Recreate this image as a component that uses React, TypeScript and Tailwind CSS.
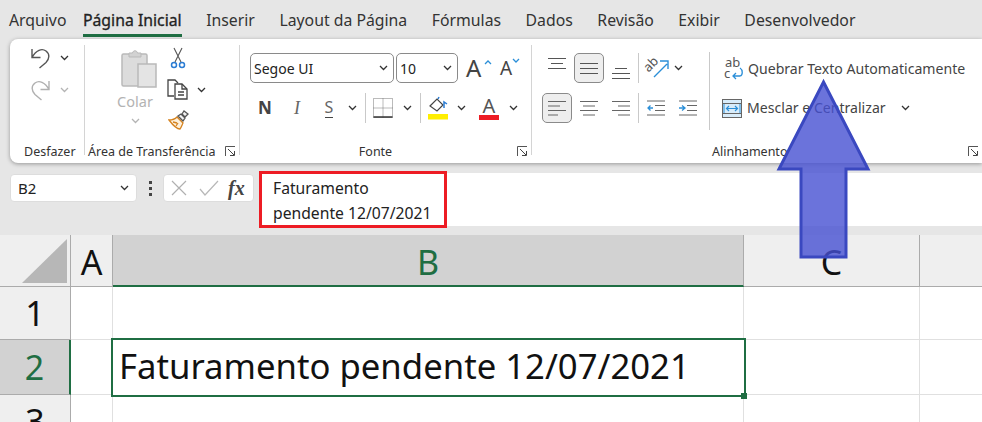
import React from "react";

const font = "font-['Noto_Sans','Open_Sans',sans-serif]";

function Chev({ gray = false, className = "" }: { gray?: boolean; className?: string }) {
  return (
    <svg width="9" height="6" viewBox="0 0 9 6" className={className} fill="none" stroke={gray ? "#b4b4b4" : "#333"} strokeWidth="1.3">
      <path d="M1 1l3.5 3.5L8 1" />
    </svg>
  );
}

function Launcher() {
  return (
    <svg width="11" height="11" viewBox="0 0 11 11" fill="none" stroke="#555" strokeWidth="1">
      <path d="M.5 10V.5H10" />
      <path d="M3 3l6 6M5 9.5h4.5V5" stroke="#444" />
    </svg>
  );
}

function Lines({ widths, gap = 5, color = "#555" }: { widths: number[]; gap?: number; color?: string }) {
  return (
    <span className="flex flex-col items-center" style={{ gap }}>
      {widths.map((w, i) => (
        <span key={i} className="block h-[1px]" style={{ width: w, background: color }} />
      ))}
    </span>
  );
}

function AlignLines({ widths, justify }: { widths: number[]; justify: string }) {
  return (
    <svg width="18" height="18" viewBox="0 0 18 18" stroke="#666" strokeWidth="1">
      {widths.map((w, i) => {
        const x = justify === "l" ? 0 : justify === "r" ? 18 - w : (18 - w) / 2;
        return <path key={i} d={`M${x} ${2.5 + i * 4.5}h${w}`} />;
      })}
    </svg>
  );
}

function Sep() {
  return <span className="mx-[5px] block h-[30px] w-[1px] bg-[#c9c9c9]" />;
}

function Group({ w, label, labelClass, launcher, children }: { w: string; label: string; labelClass: string; launcher?: boolean; children: React.ReactNode }) {
  return (
    <div className={`relative flex h-[110px] flex-col border-r border-[#d4d4d4] ${w}`}>
      <div className="flex-1">{children}</div>
      <div className={`-mb-[5px] flex h-[16px] items-center text-[12.5px] leading-[16px] text-[#333] ${labelClass}`}>
        <span>{label}</span>
      </div>
      {launcher && (
        <span className="absolute bottom-[-2px] right-[3px]">
          <Launcher />
        </span>
      )}
    </div>
  );
}

const tabs = ["Arquivo", "Página Inicial", "Inserir", "Layout da Página", "Fórmulas", "Dados", "Revisão", "Exibir", "Desenvolvedor"];

function Tabs() {
  return (
    <div className="flex h-[39px] shrink-0 items-start gap-[24.5px] pl-[9px] pt-[10px] text-[15.8px] leading-[20px] text-[#333]">
      {tabs.map((t, i) => (
        <span key={t} className={i === 1 ? "-ml-[8px] h-[27px] border-b-[3px] border-[#1f6e43] text-[#222] [-webkit-text-stroke:0.3px_#222]" : ""}>
          {t}
        </span>
      ))}
    </div>
  );
}

function UndoGroup() {
  return (
    <div className="flex flex-col gap-[10px] pl-[20px] pt-[2px]">
      <div className="flex items-center gap-[8px]">
        <svg width="22" height="22" viewBox="0 0 22 22" fill="none" stroke="#555" strokeWidth="1.4">
          <path d="M2 2v8.500h8.500M2 10.500C6 3 12 1 16 4c4 3 3.500 8 0 11.500L9.500 21" />
        </svg>
        <Chev />
      </div>
      <div className="flex items-center gap-[8px]">
        <svg width="22" height="22" viewBox="0 0 22 22" fill="none" stroke="#b0b0b0" strokeWidth="1.4">
          <path d="M19 2v8.500h-8.500M19 10.500C15 3 9 1 5 4c-4 3-3.500 8 0 11.500l6.500 5.500" />
        </svg>
        <Chev gray />
      </div>
    </div>
  );
}

function ClipboardGroup() {
  return (
    <div className="flex pl-[32px] pt-[4px]">
      <div className="flex w-[36px] flex-col items-center">
        <svg width="36" height="40" viewBox="0 0 36 40" className="ml-[8px] shrink-0">
          <rect x="1" y="5" width="25" height="32" rx="1.500" fill="#dcdcdc" stroke="#b9b9b9" strokeWidth="1.500" />
          <path d="M8 8V4h3.500c.5-3 4.500-3 5 0H20v4z" fill="#d2d2d2" stroke="#b9b9b9" />
          <rect x="17" y="15" width="18" height="23" fill="#e4e4e4" stroke="#b9b9b9" strokeWidth="1.500" />
        </svg>
        <span className="mt-[2px] text-[14.5px] leading-[20px] text-[#b3b3b3]">Colar</span>
        <Chev gray className="mt-[7px]" />
      </div>
      <div className="ml-[15px] flex flex-col items-start">
        <svg width="16" height="22" viewBox="0 0 16 22" className="ml-[2px] -mt-[2px]" fill="none" strokeWidth="1.100">
          <path d="M4 1l7 14M12 1L5 15" stroke="#555" />
          <circle cx="4" cy="18" r="2.500" stroke="#2b7cd3" strokeWidth="1.500" />
          <circle cx="12" cy="18" r="2.500" stroke="#2b7cd3" strokeWidth="1.500" />
        </svg>
        <div className="mt-[10px] flex items-center gap-[8px]">
          <svg width="22" height="21" viewBox="0 0 22 21" fill="none" stroke="#444" strokeWidth="1.300" className="-ml-[1px]">
            <path d="M7 17H1V1h7l3 3" />
            <path d="M8 5h7l5 5v10H8z" fill="#fff" />
            <path d="M15 5v5h5M11 13h6M11 16h6" />
          </svg>
          <Chev />
        </div>
        <svg width="21" height="20" viewBox="0 0 21 20" className="mt-[10px]" fill="none" strokeWidth="1.300">
          <path d="M1 10c4 0 6-1 8-3l6 6c-1 2-2 5-3 6-4 0-8-5-11-9z" fill="#fdf0dc" stroke="#d5821e" />
          <path d="M5 12l4 1M8 16l2-3" stroke="#d5821e" />
          <path d="M10 6l3-2 4 4-2 3zM14 4l2-3 4 3-3 3z" fill="#f2f2f2" stroke="#555" />
        </svg>
      </div>
    </div>
  );
}

function Select({ w, text }: { w: string; text: string }) {
  return (
    <div className={`flex h-[30px] items-center justify-between rounded-[5px] border border-[#8a8a8a] pl-[3px] pr-[5px] text-[14px] text-[#222] ${w}`}>
      <span>{text}</span>
      <Chev />
    </div>
  );
}

function Cell({ w, children }: { w: string; children: React.ReactNode }) {
  return <span className={`flex justify-center ${w}`}>{children}</span>;
}

function FontGroup() {
  return (
    <div className="flex flex-col pl-[10px] pt-[8px]">
      <div className="flex items-center">
        <Select w="w-[144px]" text="Segoe UI" />
        <span className="w-[2px]" />
        <Select w="w-[62px]" text="10" />
        <span className="relative ml-[8px] flex w-[26px] items-center text-[24px] leading-[22px] text-[#444]">
          A
          <svg width="8" height="5" viewBox="0 0 8 5" className="absolute right-[0px] top-[3px]" fill="none" stroke="#2b8fd8" strokeWidth="1.300"><path d="M1 4l3-3 3 3" /></svg>
        </span>
        <span className="relative ml-[8px] flex w-[20px] items-center text-[19px] leading-[22px] text-[#444]">
          A
          <svg width="8" height="5" viewBox="0 0 8 5" className="absolute right-[0px] top-[1px]" fill="none" stroke="#2b8fd8" strokeWidth="1.300"><path d="M1 1l3 3 3-3" /></svg>
        </span>
      </div>
      <div className="mt-[10px] flex h-[30px] items-center">
        <Cell w="w-[30px]"><span className="text-[17px] font-bold text-[#444]">N</span></Cell>
        <Cell w="w-[34px]"><span className="font-['Liberation_Serif',serif] text-[18px] italic text-[#666]">I</span></Cell>
        <Cell w="w-[30px]"><span className="border-b border-[#444] text-[16px] leading-[19px] text-[#666]">S</span></Cell>
        <Cell w="w-[16px]"><Chev /></Cell>
        <Sep />
        <svg width="20" height="20" viewBox="0 0 20 20" fill="none" stroke="#777" strokeWidth="1" strokeDasharray="1 1" className="ml-[2px]">
          <path d="M.5.5h19v19H.500zM10 .5v19M.5 10h19" />
          <path d="M.5 19h19" strokeDasharray="none" stroke="#333" strokeWidth="1.500" />
        </svg>
        <Chev className="ml-[10px] mr-[3px]" />
        <Sep />
        <svg width="22" height="24" viewBox="0 0 22 24" fill="none" stroke="#444" strokeWidth="1.200" className="ml-[2px]">
          <path d="M2 10l7-7 6 6-6 6z" />
          <path d="M10 3l1-2M16 12V6l3 2" stroke="#2b7cd3" strokeWidth="1.500" />
          <rect x="0" y="18" width="20" height="5.500" fill="#ffee00" stroke="none" />
        </svg>
        <Chev className="ml-[7px]" />
        <span className="ml-[13px] flex w-[20px] flex-col items-center">
          <span className="text-[20px] leading-[17px] text-[#555]">A</span>
          <span className="mt-[1px] block h-[5px] w-[20px] bg-[#ed1c24]" />
        </span>
        <Chev className="ml-[10px]" />
      </div>
    </div>
  );
}

function AlignGroup() {
  const box = "flex h-[30px] w-[30px] items-center justify-center rounded-[5px] border border-[#8a8a8a] bg-[#eeeeee]";
  return (
    <div className="flex h-[86px] pl-[10px] pt-[8px]">
      <div className="flex w-[167px] flex-col">
        <div className="flex h-[30px] items-center pl-[6px]">
          <span className="-mt-[10px] mr-[8px] w-[18px]"><Lines widths={[18, 12, 18]} gap={4} /></span>
          <span className={box}><Lines widths={[18, 18, 18]} gap={4} /></span>
          <span className="ml-[8px] mr-[3px] mt-[10px] w-[18px]"><Lines widths={[12, 18, 18]} gap={4} /></span>
          <Sep />
          <svg width="23" height="22" viewBox="0 0 23 22" className="ml-[2px] overflow-visible" fill="none">
            <text x="-2" y="11" fontSize="13" fill="#555" transform="rotate(-45 6 8)" fontFamily="Noto Sans">ab</text>
            <path d="M8 20L21 7M14 4h8v8" stroke="#2b8fd8" strokeWidth="1.400" />
          </svg>
          <Cell w="w-[18px]"><Chev /></Cell>
        </div>
        <div className="mt-[10px] flex h-[30px] items-center">
          <span className={box}><AlignLines widths={[18, 12, 18, 10]} justify="l" /></span>
          <Cell w="w-[34px]"><AlignLines widths={[18, 12, 18, 12]} justify="c" /></Cell>
          <span className="flex w-[24px] justify-end"><AlignLines widths={[18, 12, 18, 12]} justify="r" /></span>
          <span className="w-[3px]" />
          <Sep />
          <svg width="18" height="16" viewBox="0 0 18 16" className="ml-[3px]" fill="none">
            <path d="M0 1h18M8 5.500h10M8 10.500h10M0 15h18" stroke="#666" />
            <path d="M6 8H1M3.500 5.500L1 8l2.500 2.500" stroke="#2b8fd8" strokeWidth="1.300" />
          </svg>
          <svg width="18" height="16" viewBox="0 0 18 16" className="ml-[14px]" fill="none">
            <path d="M0 1h18M8 5.500h10M8 10.500h10M0 15h18" stroke="#666" />
            <path d="M0 8h5M3 5.500L6 8l-3 2.500" stroke="#2b8fd8" strokeWidth="1.300" />
          </svg>
        </div>
      </div>
      <span className="-mt-[1px] block h-[78px] w-[1px] bg-[#c9c9c9]" />
      <div className="flex flex-col pl-[12px] text-[14.1px] text-[#444]">
        <div className="flex h-[30px] items-center pt-[1px]">
          <span className="relative ml-[2px] flex h-[24px] w-[20px] flex-col text-[13px] leading-[11px] text-[#555]">
            <span className="block pl-[1px]">ab</span>
            <span className="block">c</span>
            <svg width="14" height="14" viewBox="0 0 14 14" className="absolute bottom-[0px] right-[0px]" fill="none" stroke="#2b8fd8" strokeWidth="1.300">
              <path d="M10 1c3 2 3 7 0 8H3M6 6L3 9l3 3" />
            </svg>
          </span>
          <span className="ml-[4px] whitespace-nowrap">Quebrar Texto Automaticamente</span>
        </div>
        <div className="mt-[10px] flex h-[30px] items-center">
          <svg width="20" height="19" viewBox="0 0 20 19" fill="none">
            <rect x=".5" y=".5" width="19" height="18" fill="#d8ecfa" stroke="#666" />
            <path d="M0 4.500h20M0 14.500h20" stroke="#666" />
            <path d="M5 9.500h10M7 7L4.500 9.500 7 12M13 7l2.500 2.500L13 12" stroke="#2b8fd8" strokeWidth="1.200" />
            <path d="M2 5v9M18 5v9" stroke="#2b8fd8" />
          </svg>
          <span className="ml-[5px] whitespace-nowrap">Mesclar e Centralizar</span>
          <Chev className="ml-[15px]" />
        </div>
      </div>
    </div>
  );
}

function Ribbon() {
  return (
    <div className="ml-[10px] flex h-[124px] shrink-0 rounded-l-[8px] bg-white pt-[6px] shadow-[0_1px_4px_rgba(0,0,0,0.35)]">
      <Group w="w-[75px]" label="Desfazer" labelClass="pl-[14px]"><UndoGroup /></Group>
      <Group w="w-[155px]" label="Área de Transferência" labelClass="pl-[3px]" launcher><ClipboardGroup /></Group>
      <Group w="w-[292px]" label="Fonte" labelClass="justify-center pr-[20px]" launcher><FontGroup /></Group>
      <Group w="flex-1 border-r-0" label="Alinhamento" labelClass="pl-[180px]" launcher><AlignGroup /></Group>
    </div>
  );
}

function FormulaRow() {
  return (
    <div className="flex h-[72px] shrink-0 items-start pl-[10px] pt-[9px] text-[15px] text-[#222]">
      <div className="mt-[2px] flex h-[28px] w-[127px] items-center justify-between rounded-[4px] border border-[#dddddd] bg-white pl-[7px] pr-[7px]">
        <span>B2</span>
        <Chev />
      </div>
      <div className="mt-[2px] flex h-[28px] w-[26px] flex-col items-center justify-center gap-[3px]">
        {[0, 1, 2].map((i) => <span key={i} className="block h-[3px] w-[3px] bg-[#444]" />)}
      </div>
      <div className="mt-[2px] flex h-[28px] w-[91px] items-center rounded-[4px] border border-[#dddddd] bg-white pl-[7px]">
        <svg width="16" height="16" viewBox="0 0 16 16" fill="none" stroke="#b0b0b0" strokeWidth="1.200"><path d="M1 1l14 14M15 1L1 15" /></svg>
        <svg width="20" height="16" viewBox="0 0 20 16" className="ml-[12px]" fill="none" stroke="#b8b8b8" strokeWidth="1.200"><path d="M1 9l5 6L19 1" /></svg>
        <span className="ml-[9px] font-['Liberation_Serif',serif] text-[20px] font-bold italic leading-[20px] text-[#444]">fx</span>
      </div>
      <div className="ml-[5px] mt-[1px] h-[53px] flex-1 bg-white">
        <div className="-mt-[2px] h-[57px] w-[188px] border-[3px] border-[#ed1c24] pl-[11px] pt-[2px] leading-[25px]">
          <div className="whitespace-nowrap text-[15.7px]">Faturamento</div>
          <div className="whitespace-nowrap text-[15.7px]">pendente 12/07/2021</div>
        </div>
      </div>
    </div>
  );
}

function Sheet() {
  const head = "flex items-center justify-center bg-[#efefef] text-[34px] leading-none";
  const colHead = "pt-[3px]";
  const grid = "border-b border-r border-[#e0e0e0] bg-white";
  return (
    <div className="grid min-h-0 flex-1 grid-cols-[71px_42px_631px_176px_1fr] grid-rows-[52px_53px_55px_1fr] bg-white">
      <div className="flex items-end justify-end border-b border-r border-[#ababab] bg-[#efefef] pb-[3px] pr-[3px]">
        <svg width="45" height="44" viewBox="0 0 45 44"><polygon points="45,0 45,44 0,44" fill="#b7b7b7" /></svg>
      </div>
      <div className={`${head} ${colHead} border-b border-r border-[#ababab] text-[#111]`}>A</div>
      <div className="flex items-center justify-center border-b-[2px] border-r border-[#1f6e43] border-r-[#ababab] bg-[#d2d2d2] pt-[3px] text-[34px] leading-none text-[#1f6e43]">B</div>
      <div className={`${head} ${colHead} border-b border-r border-[#ababab] text-[#111]`}>C</div>
      <div className="border-b border-[#ababab] bg-[#efefef]" />

      <div className={`${head} border-b border-r border-[#ababab] text-[#111]`}>1</div>
      <div className={grid} /><div className={grid} /><div className={grid} /><div className="border-b border-[#e0e0e0]" />

      <div className="flex items-center justify-center border-b border-r-[2px] border-[#ababab] border-r-[#1f6e43] bg-[#d2d2d2] text-[34px] leading-none text-[#1f6e43]">2</div>
      <div className={grid} />
      <div className="relative z-10 flex items-center bg-white pb-[2px] pl-[6px] text-[34.7px] leading-none text-[#111] outline-2 outline-[#1f6e43]">
        <span className="whitespace-nowrap">Faturamento pendente 12/07/2021</span>
        <span className="absolute -bottom-[4px] -right-[3px] block h-[6px] w-[6px] bg-[#1f6e43]" />
      </div>
      <div className={grid} /><div className="border-b border-[#e0e0e0]" />

      <div className={`${head} items-start overflow-hidden border-r border-[#ababab] pt-[9px] text-[#111]`}>3</div>
      <div className="border-r border-[#e0e0e0]" /><div className="border-r border-[#e0e0e0]" /><div className="border-r border-[#e0e0e0]" /><div />
    </div>
  );
}

export default function App() {
  return (
    <div className={`relative flex h-[422px] w-[982px] flex-col overflow-hidden bg-[#e6e6e6] ${font}`}>
      <Tabs />
      <Ribbon />
      <FormulaRow />
      <Sheet />
      <svg width="982" height="422" viewBox="0 0 982 422" className="pointer-events-none absolute left-0 top-0 z-20">
        <polygon points="823.500,82 868,169 846,169 846,257 801,257 801,169 779,169" fill="#4650d2" fillOpacity="0.8" stroke="#3a48c0" strokeWidth="3" />
      </svg>
    </div>
  );
}
